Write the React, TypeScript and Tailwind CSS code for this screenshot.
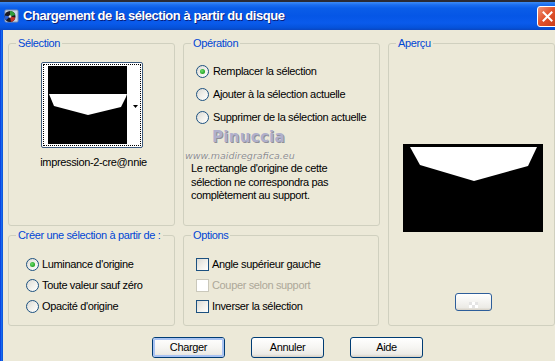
import React from "react";

function Radio({ checked }: { checked?: boolean }) {
  return (
    <span className="w-[13px] h-[13px] rounded-full border border-[#1C5180] bg-[linear-gradient(135deg,#DCDBD5_0%,#F4F3EE_60%,#FFFFFF_100%)] flex items-center justify-center shrink-0">
      {checked && <span className="w-[5px] h-[5px] rounded-full bg-[radial-gradient(circle_at_40%_40%,#6FE06F_0%,#21A121_70%,#1A8A1A_100%)]" />}
    </span>
  );
}

function Check({ disabled }: { disabled?: boolean }) {
  return (
    <span
      className={
        disabled
          ? "w-[13px] h-[13px] border border-[#CAC8BB] bg-white shrink-0"
          : "w-[13px] h-[13px] border border-[#1C5180] bg-[linear-gradient(135deg,#DCDBD5_0%,#F4F3EE_60%,#FFFFFF_100%)] shrink-0"
      }
    />
  );
}

function Group({ label, className, children }: { label: string; className?: string; children?: React.ReactNode }) {
  return (
    <div className={"relative border border-[#D0D0BF] rounded-[3px] " + (className ?? "")}>
      <span className="absolute left-[7px] top-[-8px] px-[2px] bg-[#ECE9D8] text-[#0046D5] text-[11px] leading-[14px] whitespace-nowrap">{label}</span>
      {children}
    </div>
  );
}

function Button({ label, def }: { label: string; def?: boolean }) {
  return (
    <div className="w-[73px] h-[21px] rounded-[3px] border border-[#003C74] bg-[linear-gradient(to_bottom,#FFFFFF_0%,#F6F5F2_50%,#ECEBE6_85%,#D6D0C5_100%)] flex items-center justify-center">
      <div
        className={
          "w-full h-full rounded-[2px] flex items-center justify-center text-[11px] text-black " +
          (def ? "border-2 border-[#A9C3F2]" : "")
        }
      >
        {label}
      </div>
    </div>
  );
}

export default function App() {
  return (
    <div className="w-[555px] h-[361px] bg-[#ECE9D8] flex flex-col overflow-hidden font-['Liberation_Sans',Arial,sans-serif] tracking-[-0.35px] text-black">
      <div className="h-[2px] bg-[#2a2a33] shrink-0" />
      {/* title bar */}
      <div className="h-[28px] shrink-0 flex items-center bg-[linear-gradient(to_bottom,#3D8CF5_0%,#1C6EF0_10%,#0A5DE8_22%,#0556E6_50%,#0A5BEC_75%,#0552DA_92%,#0A46C0_100%)]">
        <svg width="16" height="16" viewBox="0 0 16 16" className="ml-[3px] shrink-0">
          <rect x="2" y="2" width="13" height="12" rx="1" fill="#C9D6E8" stroke="#7F8FAF" strokeWidth="1" />
          <circle cx="7" cy="8.5" r="5.5" fill="#1A1A22" />
          <path d="M7 8.5 L7 3 A5.5 5.5 0 0 1 12.2 7 Z" fill="#2E9E3A" />
          <path d="M7 8.5 L12.3 9.5 A5.5 5.5 0 0 1 8 13.9 Z" fill="#C0342A" />
          <path d="M7 8.5 L3 12.3 A5.5 5.5 0 0 1 1.6 7.5 Z" fill="#2B5FD0" />
          <circle cx="7" cy="8.5" r="1.3" fill="#E8E8E8" />
        </svg>
        <span className="ml-[4px] text-white font-bold text-[13px] tracking-[-0.45px] font-['Liberation_Sans',sans-serif] [text-shadow:1px_1px_0_#0A1E7A]">
          Chargement de la sélection à partir du disque
        </span>
        <div className="ml-auto mr-[-3px] mt-[1px] w-[21px] h-[21px] rounded-[3px] border border-white bg-[linear-gradient(135deg,#F0957A_0%,#E2542E_45%,#C83A14_100%)] flex items-center justify-center shrink-0">
          <svg width="11" height="11" viewBox="0 0 11 11">
            <path d="M1.5 1.5 L9.5 9.5 M9.5 1.5 L1.5 9.5" stroke="white" strokeWidth="2" strokeLinecap="square" />
          </svg>
        </div>
      </div>

      {/* body */}
      <div className="flex-1 flex">
        <div className="w-[3px] bg-[linear-gradient(to_right,#0831D9,#166AEE,#0A4FD6)] shrink-0" />
        <div className="flex-1 flex flex-col pl-[5px] pt-[13px]">
          <div className="grid grid-cols-[167px_197px_167px] grid-rows-[183px_91px] gap-x-[8px] gap-y-[9px]">
            {/* Sélection */}
            <Group label="Sélection" className="flex flex-col items-center">
              <div className="mt-[18px] ml-[1px] w-[102px] h-[86px] border border-[#3C5A7C] rounded-[2px] bg-white p-[1px]">
                <div className="w-full h-full border border-dotted border-black flex pt-[1px] pl-[4px]">
                  <svg width="79" height="78" viewBox="0 0 79 78" className="shrink-0">
                    <rect width="79" height="78" fill="#000" />
                    <polygon points="1,28 79,28 78,31 73,41 40,49 6,40" fill="#fff" />
                  </svg>
                  <div className="flex-1 flex items-center justify-end pr-[2px]">
                    <svg width="5" height="3" viewBox="0 0 5 3" className="mt-[1px]">
                      <polygon points="0,0 5,0 2.5,3" fill="#000" />
                    </svg>
                  </div>
                </div>
              </div>
              <div className="mt-[8px] ml-[4px] text-[11px] leading-[13px]">impression-2-cre@nnie</div>
            </Group>

            {/* Opération */}
            <Group label="Opération" className="relative">
              <div className="flex flex-col pl-[12px] pt-[21px] gap-[10px]">
                <div className="flex items-center gap-[4px] h-[13px] text-[11px]"><Radio checked />Remplacer la sélection</div>
                <div className="flex items-center gap-[4px] h-[13px] text-[11px]"><Radio />Ajouter à la sélection actuelle</div>
                <div className="flex items-center gap-[4px] h-[13px] text-[11px]"><Radio />Supprimer de la sélection actuelle</div>
              </div>
              <div className="mt-[38px] pl-[7px] text-[11px] leading-[13.5px]">
                Le rectangle d'origine de cette<br />sélection ne correspondra pas<br />complètement au support.
              </div>
              <span className="absolute left-[28px] top-[82px] text-[15px] font-bold text-[#B0B0CC] font-['DejaVu_Sans',sans-serif] [text-shadow:1px_1px_0_#8E8E98] tracking-[0.3px]">Pinuccia</span>
              <span className="absolute left-[1px] top-[105px] text-[9.5px] italic text-[#8C8C8C] tracking-[0px] font-['DejaVu_Sans',sans-serif] [text-shadow:0_0_1px_#fff]">www.maidiregrafica.eu</span>
            </Group>

            {/* Aperçu */}
            <Group label="Aperçu" className="row-span-2 flex flex-col items-center">
              <svg width="140" height="88" viewBox="0 0 140 88" className="mt-[100px] ml-[2px]">
                <rect width="140" height="88" fill="#000" />
                <polygon points="7,3 134,3 125,22 71,37 17,21" fill="#fff" />
              </svg>
              <div className="mt-[61px] ml-[4px] w-[37px] h-[18px] rounded-[3px] border border-[#2D5E9A] bg-[linear-gradient(to_bottom,#FFFFFF,#ECEBE6_85%,#D6D0C5)] flex items-center justify-center">
                <div className="grid grid-cols-3 grid-rows-2 w-[9px] h-[6px] mt-[6px]">
                  <span className="bg-[#E4E4E4]" /><span className="bg-white" /><span className="bg-[#E4E4E4]" />
                  <span className="bg-white" /><span className="bg-[#E4E4E4]" /><span className="bg-white" />
                </div>
              </div>
            </Group>

            {/* Créer */}
            <Group label="Créer une sélection à partir de :">
              <div className="flex flex-col pl-[17px] pt-[22px] gap-[8px]">
                <div className="flex items-center gap-[3px] h-[13px] text-[11px]"><Radio checked />Luminance d'origine</div>
                <div className="flex items-center gap-[3px] h-[13px] text-[11px]"><Radio />Toute valeur sauf zéro</div>
                <div className="flex items-center gap-[3px] h-[13px] text-[11px]"><Radio />Opacité d'origine</div>
              </div>
            </Group>

            {/* Options */}
            <Group label="Options" className="mr-[1px]">
              <div className="flex flex-col pl-[12px] pt-[22px] gap-[8px]">
                <div className="flex items-center gap-[3px] h-[13px] text-[11px]"><Check />Angle supérieur gauche</div>
                <div className="flex items-center gap-[3px] h-[13px] text-[11px] text-[#ACA899]"><Check disabled />Couper selon support</div>
                <div className="flex items-center gap-[3px] h-[13px] text-[11px]"><Check />Inverser la sélection</div>
              </div>
            </Group>
          </div>

          <div className="flex pl-[144px] pt-[11px] gap-[26px]">
            <Button label="Charger" def />
            <Button label="Annuler" />
            <Button label="Aide" />
          </div>
        </div>
      </div>
    </div>
  );
}
